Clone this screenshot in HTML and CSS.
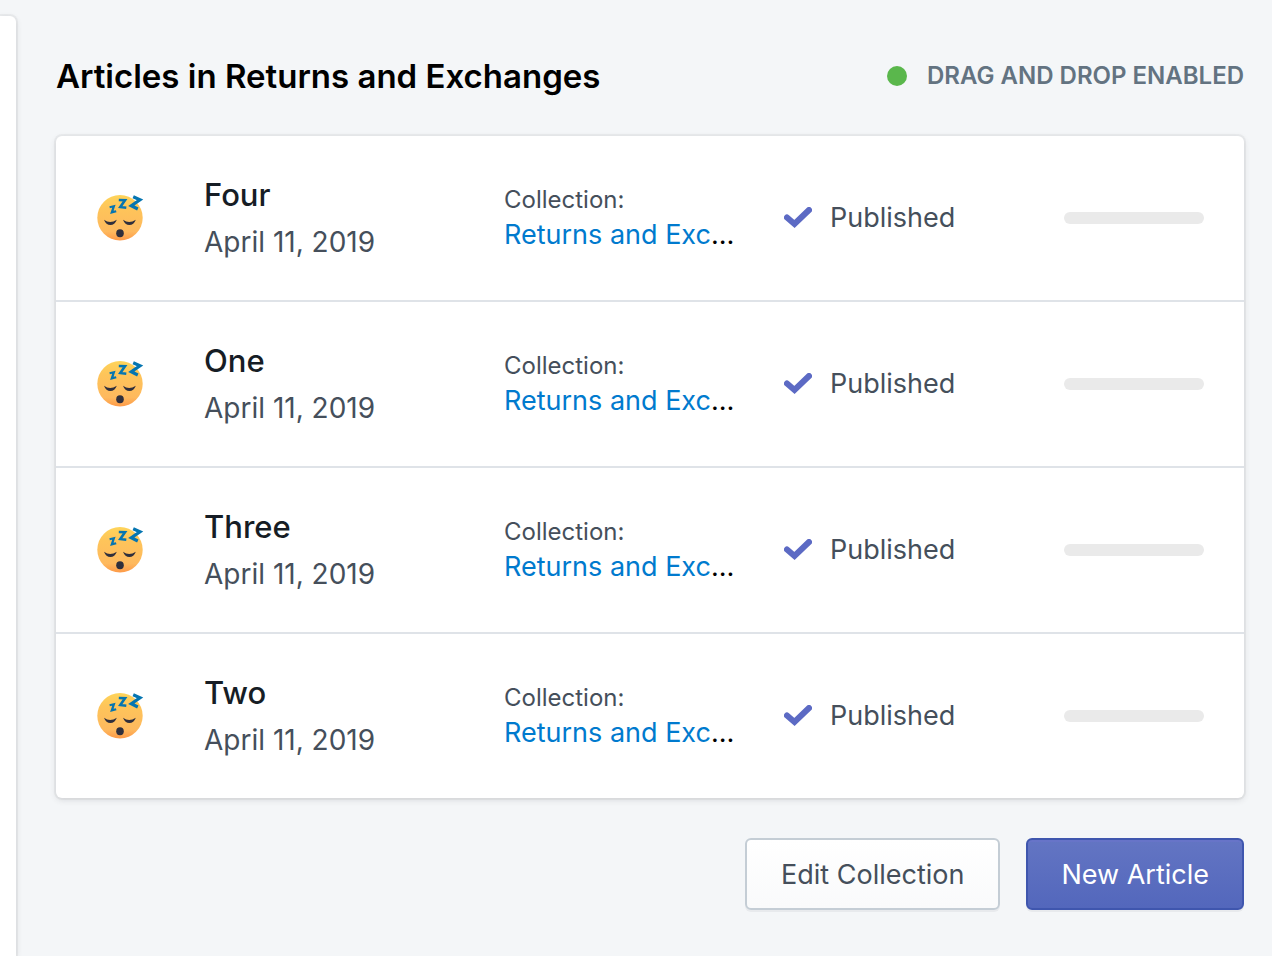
FILE: index.html
```
<!DOCTYPE html>
<html lang="en">
<head>
<meta charset="utf-8">
<meta name="viewport" content="width=device-width, initial-scale=1">
<title>Articles in Returns and Exchanges</title>
<link rel="stylesheet" href="styles.css">
</head>
<body>
<svg class="sprite" aria-hidden="true">
  <defs>
    <linearGradient id="face" x1="0" y1="0" x2="0" y2="1">
      <stop offset="0" stop-color="#fed45a"/>
      <stop offset=".3" stop-color="#fec45a"/>
      <stop offset=".8" stop-color="#feb95e"/>
      <stop offset="1" stop-color="#fd9a48"/>
    </linearGradient>
    <symbol id="sleepy" viewBox="0 0 48 48">
      <circle cx="24" cy="23.800" r="22.700" fill="url(#face)"/>
      <path d="M8 25.800q6 4.500 12.800 0q-2 5.300-6.400 5.300t-6.400-5.300zM27 25.800q6 4.500 12.800 0q-2 5.300-6.400 5.300t-6.400-5.300z" fill="#302f3c"/>
      <ellipse cx="24" cy="39.200" rx="3.800" ry="4" fill="#302f3c"/>
      <g fill="none" stroke="#0575b1" stroke-linejoin="miter">
        <path d="M13.600 13.200L17.900 12.200L15.800 18.400L20.200 17.200" stroke-width="2.200"/>
        <path d="M22.800 6L29 6.200L24.300 13L30.300 13.800" stroke-width="2.600"/>
        <path d="M37.200 2.700L44 5.700L35.300 11.800L41.800 15" stroke-width="3.200"/>
      </g>
    </symbol>
    <symbol id="check" viewBox="0 0 28 22">
      <path d="M3 10.500L10.500 17L25 3" fill="none" stroke="#5c6ac4" stroke-width="6" stroke-linecap="round"/>
    </symbol>
  </defs>
</svg>
<div class="page">
  <aside class="side-panel"></aside>
  <main class="content">
    <header class="heading">
      <h1 class="title">Articles in Returns and Exchanges</h1>
      <p class="drag-status"><span class="dot"></span>Drag and drop enabled</p>
    </header>
    <ul class="articles">
      <li class="article">
        <svg class="emoji" role="img" aria-label="Sleeping face"><use href="#sleepy"/></svg>
        <div class="info"><h2 class="name">Four</h2><p class="date">April 11, 2019</p></div>
        <div class="collection"><p class="label">Collection:</p><p class="collection-name"><a href="#">Returns and Exchanges</a></p></div>
        <p class="state"><svg class="check" aria-hidden="true"><use href="#check"/></svg>Published</p>
        <span class="bar"></span>
      </li>
      <li class="article">
        <svg class="emoji" role="img" aria-label="Sleeping face"><use href="#sleepy"/></svg>
        <div class="info"><h2 class="name">One</h2><p class="date">April 11, 2019</p></div>
        <div class="collection"><p class="label">Collection:</p><p class="collection-name"><a href="#">Returns and Exchanges</a></p></div>
        <p class="state"><svg class="check" aria-hidden="true"><use href="#check"/></svg>Published</p>
        <span class="bar"></span>
      </li>
      <li class="article">
        <svg class="emoji" role="img" aria-label="Sleeping face"><use href="#sleepy"/></svg>
        <div class="info"><h2 class="name">Three</h2><p class="date">April 11, 2019</p></div>
        <div class="collection"><p class="label">Collection:</p><p class="collection-name"><a href="#">Returns and Exchanges</a></p></div>
        <p class="state"><svg class="check" aria-hidden="true"><use href="#check"/></svg>Published</p>
        <span class="bar"></span>
      </li>
      <li class="article">
        <svg class="emoji" role="img" aria-label="Sleeping face"><use href="#sleepy"/></svg>
        <div class="info"><h2 class="name">Two</h2><p class="date">April 11, 2019</p></div>
        <div class="collection"><p class="label">Collection:</p><p class="collection-name"><a href="#">Returns and Exchanges</a></p></div>
        <p class="state"><svg class="check" aria-hidden="true"><use href="#check"/></svg>Published</p>
        <span class="bar"></span>
      </li>
    </ul>
    <div class="actions">
      <button class="button" type="button">Edit Collection</button>
      <button class="button primary" type="button">New Article</button>
    </div>
  </main>
</div>
</body>
</html>
```
FILE: styles.css
```
* { box-sizing: border-box; }
body {
  margin: 0;
  background: #f4f6f8;
  color: #000;
  font-family: Inter, "Liberation Sans", sans-serif;
  font-size: 28px;
}
h1, h2, p, ul { margin: 0; padding: 0; }
.sprite { position: absolute; width: 0; height: 0; }
.page {
  display: flex;
  gap: 40px;
  min-height: 100vh;
  padding-top: 16px;
}
.side-panel {
  flex: none;
  width: 16px;
  background: #fff;
  border-radius: 0 6px 0 0;
  box-shadow: 0 0 0 2px rgba(63, 63, 68, .05), 0 2px 6px rgba(63, 63, 68, .15);
}
.content { flex: 1; min-width: 0; padding: 36px 28px 46px 0; }
.heading {
  display: flex;
  align-items: center;
  justify-content: space-between;
  margin-bottom: 36px;
}
.title { font-size: 33px; line-height: 48px; font-weight: 600; }
.drag-status {
  display: flex;
  align-items: center;
  gap: 20px;
  color: #637381;
  font-size: 24px;
  line-height: 32px;
  font-weight: 600;
  text-transform: uppercase;
}
.dot { width: 20px; height: 20px; border-radius: 50%; background: #5ab74c; }
.articles {
  list-style: none;
  background: #fff;
  border-radius: 6px;
  box-shadow: 0 0 0 2px rgba(63, 63, 68, .05), 0 2px 6px rgba(63, 63, 68, .15);
}
.article {
  display: grid;
  grid-template-columns: 108px 300px 280px 1fr 140px;
  align-items: center;
  padding: 35px 40px;
}
.article + .article { border-top: 2px solid #dfe3e8; }
.emoji { width: 48px; height: 48px; }
.name { color: #161d25; font-size: 31px; line-height: 48px; font-weight: 500; }
.date { color: #454f5b; font-size: 28px; line-height: 46px; }
.collection { min-width: 0; padding-right: 48px; }
.label { color: #454f5b; font-size: 24px; line-height: 34px; }
.collection-name {
  overflow: hidden;
  white-space: nowrap;
  text-overflow: ellipsis;
  font-size: 27px;
  line-height: 36px;
}
.collection-name a { color: #007ace; text-decoration: none; }
.state {
  display: flex;
  align-items: center;
  gap: 18px;
  color: #454f5b;
  font-size: 27px;
  line-height: 42px;
}
.check { width: 28px; height: 22px; }
.bar { height: 12px; border-radius: 6px; background: #eaeaea; }
.actions { display: flex; justify-content: flex-end; gap: 26px; margin-top: 40px; }
.button {
  height: 72px;
  padding: 0 34px;
  border: 2px solid #c4cdd5;
  border-radius: 6px;
  background: linear-gradient(#fff, #f9fafb);
  box-shadow: 0 2px 0 rgba(22, 29, 37, .05);
  color: #454f5b;
  font-family: inherit;
  font-size: 27px;
  cursor: pointer;
}
.button.primary {
  padding: 0 33px;
  border-color: #3f56ae;
  background: linear-gradient(#6375c3, #5367bc);
  box-shadow: inset 0 2px 0 #6774c8, 0 2px 0 rgba(22, 29, 37, .05);
  color: #fff;
}
```
